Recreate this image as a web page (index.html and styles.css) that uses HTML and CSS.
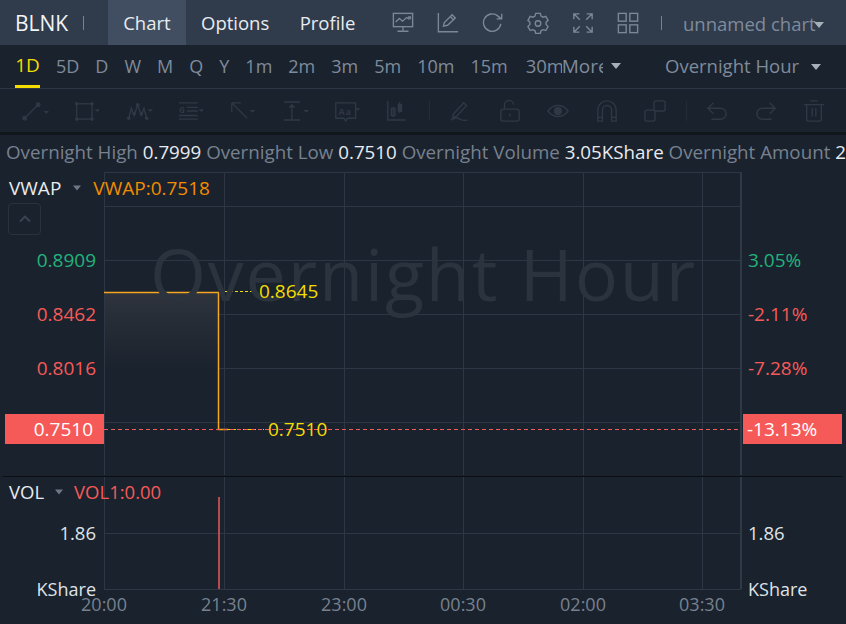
FILE: index.html
```html
<!DOCTYPE html>
<html lang="en">
<head>
<meta charset="utf-8">
<title>BLNK Chart</title>
<link rel="stylesheet" href="styles.css">
</head>
<body>
<div class="app">
  <header class="topbar">
    <div class="symbol">BLNK<span class="sep"></span></div>
    <nav class="tabs">
      <span class="tab active">Chart</span>
      <span class="tab">Options</span>
      <span class="tab">Profile</span>
    </nav>
    <div class="top-icons">
      <svg class="ti" viewBox="0 0 24 24"><rect x="1.500" y="1.500" width="21" height="14.500"/><path d="M4 11l4-4 3.500 3L16 6l3 2M17.500 5.500h2.500v2.500M12 16v4M6 21h12"/></svg>
      <svg class="ti" viewBox="0 0 24 24"><path d="M1.500 1v20.500H23M7 15.500l1-4L16.500 3l3.500 3.500-8.500 8-4.500 1zM14.500 5l3.500 3.500"/></svg>
      <svg class="ti" viewBox="0 0 24 24"><path d="M20.500 13a9.500 9.500 0 1 1-3-8.500L21 7.500M21.500 2v5.500H16"/></svg>
      <svg class="ti" viewBox="0 0 24 24"><path d="M9.500 1.500h5l.8 3 2.200 1.200 3-.9 2.500 4.300-2.200 2.200v2.400l2.200 2.200-2.500 4.300-3-.9-2.200 1.200-.8 3h-5l-.8-3-2.200-1.200-3 .9L1 15.900l2.200-2.200v-2.400L1 9.100l2.500-4.300 3 .9 2.200-1.200z"/><circle cx="12" cy="12.500" r="3"/></svg>
      <svg class="ti" viewBox="0 0 24 24"><path d="M2 8V2h6M2 2l6.500 6.500M16 2h6v6M22 2l-6.500 6.500M2 16v6h6M2 22l6.500-6.500M22 16v6h-6M22 22l-6.500-6.500"/></svg>
      <svg class="ti" viewBox="0 0 24 24"><rect x="1.500" y="1.500" width="8.500" height="8.500"/><rect x="14" y="1.500" width="8.500" height="8.500"/><rect x="1.500" y="14" width="8.500" height="8.500"/><rect x="14" y="14" width="8.500" height="8.500"/></svg>
    </div>
    <span class="sep top-sep"></span>
    <div class="chart-name">unnamed chart<span class="caret"></span></div>
  </header>

  <div class="periods">
    <span class="period on">1D</span><span class="period">5D</span><span class="period">D</span><span class="period">W</span><span class="period">M</span><span class="period">Q</span><span class="period">Y</span><span class="period">1m</span><span class="period">2m</span><span class="period">3m</span><span class="period">5m</span><span class="period">10m</span><span class="period">15m</span><span class="period last">30m</span>
    <span class="more"><span class="more-txt">More</span><span class="caret"></span></span>
    <span class="session">Overnight Hour<span class="caret"></span></span>
  </div>

  <div class="tools">
    <div class="tool-group draw">
      <svg class="tool t-c" viewBox="0 0 30 24"><circle cx="3" cy="20" r="2"/><circle cx="18" cy="5" r="2"/><path d="M4 19L17 6"/><path class="f" d="M24 12h6l-3 3z"/></svg>
      <svg class="tool t-c" viewBox="0 0 30 24"><rect x="3" y="4" width="17" height="17"/><g class="f"><circle cx="3" cy="4" r="2"/><circle cx="20" cy="4" r="2"/><circle cx="3" cy="21" r="2"/><circle cx="20" cy="21" r="2"/><path d="M23 10h6l-3 3z"/></g></svg>
      <svg class="tool t-c" viewBox="0 0 30 24"><path d="M3 20l3-11 3 8 4-12 4 12 3-8 3 11"/><g class="f"><circle cx="3" cy="20" r="2"/><circle cx="13" cy="5" r="2"/><circle cx="9" cy="15" r="2"/><circle cx="17" cy="15" r="2"/><circle cx="23" cy="20" r="2"/><path d="M24 10h6l-3 3z"/></g></svg>
      <svg class="tool t-c" viewBox="0 0 30 24"><path d="M1 3h21M10 8h12M10 12h12M1 17h21M1 21h21"/><text x="1" y="14" class="g">G</text><path class="f" d="M23 10h6l-3 3z"/></svg>
      <svg class="tool t-c" viewBox="0 0 30 24"><path d="M2 3h10M2 3v10M2 3l17 17"/><path class="f" d="M22 11h6l-3 3z"/></svg>
      <svg class="tool t-c" viewBox="0 0 30 24"><path d="M2 2h18M2 22h18M11 5v17"/><path class="f" d="M7 8l4-4 4 4zM24 11h6l-3 3z"/></svg>
      <svg class="tool t-c" viewBox="0 0 30 24"><path d="M2 3h22v17H15l-2 3-2-3H2z"/><text x="5" y="16" class="g wide">Aa</text><path class="f" d="M24 9h5l-3 3z"/></svg>
      <svg class="tool t-c" viewBox="0 0 30 24"><path d="M2 1v21h20M8 8v11M15 2v12"/><rect x="6" y="9" width="4" height="8"/><rect class="f" x="13" y="4" width="5" height="9"/></svg>
    </div>
    <span class="tool-sep s1"></span>
    <div class="tool-group edit">
      <svg class="tool" viewBox="0 0 24 24"><path d="M4 15L15 3l3 3L7 18l-4 1zM1 22c4-3 7-3 10-1s5 1 8 1"/></svg>
      <svg class="tool" viewBox="0 0 24 24"><rect x="2" y="10" width="20" height="13" rx="2.500"/><path d="M6 10V6a5 5 0 0 1 10-1M12 15v3"/></svg>
      <svg class="tool" viewBox="0 0 24 24"><path d="M1 12c6-8 16-8 22 0-6 8-16 8-22 0z"/><circle class="f" cx="12" cy="12" r="4.500"/></svg>
      <svg class="tool" viewBox="0 0 24 24"><path d="M2 23V11a10 10 0 0 1 20 0v12h-5V11a5 5 0 0 0-10 0v12zM2 19h5M17 19h5"/></svg>
      <svg class="tool" viewBox="0 0 24 24"><rect x="1" y="11" width="11" height="12" rx="2"/><rect x="11" y="1" width="12" height="11" rx="2"/></svg>
    </div>
    <span class="tool-sep s2"></span>
    <div class="tool-group edit">
      <svg class="tool" viewBox="0 0 24 24"><path d="M8 3L2 9l6 6M2 9h14a6 6 0 0 1 0 12H6"/></svg>
      <svg class="tool" viewBox="0 0 24 24"><path d="M16 3l6 6-6 6M22 9H8a6 6 0 0 0 0 12h10"/></svg>
      <svg class="tool" viewBox="0 0 24 24"><path d="M1 5h22M8 1h8M4 5v16a2 2 0 0 0 2 2h12a2 2 0 0 0 2-2V5M10 9v9M14 9v9"/></svg>
    </div>
  </div>

  <div class="stats"><span class="k">Overnight High</span> <b>0.7999</b> <span class="k">Overnight Low</span> <b>0.7510</b> <span class="k">Overnight Volume</span> <b>3.05KShare</b> <span class="k">Overnight Amount</span> <b>2</b></div>

  <main class="chart">
    <svg class="plot" width="846" height="452" viewBox="0 172 846 452">
      <defs>
        <linearGradient id="area" x1="0" y1="0" x2="0" y2="1">
          <stop offset="0" stop-color="#2e333c"/>
          <stop offset="1" stop-color="#1a222d"/>
        </linearGradient>
      </defs>
      <g class="grid">
        <path d="M104 172.500H741M104 206.500H741M104 260.500H741M104 314.500H741M104 368.500H741M104 422.500H741"/>
        <path d="M104.500 172V475M224.500 172V475M344.500 172V475M463.500 172V475M583.500 172V475M702.500 172V475"/>
        <path d="M104.500 477V589M224.500 477V589M344.500 477V589M463.500 477V589M583.500 477V589M702.500 477V589"/>
        <path d="M104 533.500H741M104 589.500H741"/>
      </g>
      <path class="axis" d="M741 172V475M741 477V589"/>
      <path class="divider" d="M2 476.500H843"/>
      <rect x="105" y="293" width="113" height="76" fill="url(#area)"/>
      <path class="price" d="M104 292.500H218.500V429.500H228"/>
      <path class="dash-y" d="M220 291.500H254M228 429.500H264"/>
      <path class="dash-r" d="M104 429.500H741"/>
      <path class="vol" d="M219 497V589"/>
    </svg>
    <div class="watermark">Overnight Hour</div>

    <div class="legend l-vwap"><span class="nm">VWAP</span><span class="caret"></span><span class="orange">VWAP:0.7518</span></div>
    <div class="collapse"><svg viewBox="0 0 12 8"><path d="M1 6.500L6 1.500l5 5"/></svg></div>

    <span class="yl green" style="top:247px">0.8909</span>
    <span class="yl red" style="top:301px">0.8462</span>
    <span class="yl red" style="top:355px">0.8016</span>
    <span class="tag tag-l">0.7510</span>
    <span class="yr green" style="top:247px">3.05%</span>
    <span class="yr red" style="top:301px">-2.11%</span>
    <span class="yr red" style="top:355px">-7.28%</span>
    <span class="tag tag-r">-13.13%</span>

    <span class="mark" style="left:259px;top:278px">0.8645</span>
    <span class="mark" style="left:268px;top:416px">0.7510</span>

    <div class="legend l-vol"><span class="nm">VOL</span><span class="caret"></span><span class="redtxt">VOL1:0.00</span></div>
    <span class="yl white" style="top:520px">1.86</span>
    <span class="yl white small" style="top:576px">KShare</span>
    <span class="yr white" style="top:520px">1.86</span>
    <span class="yr white small" style="top:576px">KShare</span>

    <span class="xl" style="left:104px">20:00</span>
    <span class="xl" style="left:224px">21:30</span>
    <span class="xl" style="left:344px">23:00</span>
    <span class="xl" style="left:463px">00:30</span>
    <span class="xl" style="left:583px">02:00</span>
    <span class="xl" style="left:702px">03:30</span>
  </main>
</div>
</body>
</html>
```
FILE: styles.css
```css
* { box-sizing: border-box; }
html, body { margin: 0; padding: 0; }
body {
  width: 846px;
  height: 624px;
  overflow: hidden;
  background: #1a222d;
  font-family: "Open Sans", "Noto Sans", sans-serif;
  font-size: 19px;
  color: #e8ebef;
}
.app { width: 846px; height: 624px; position: relative; overflow: hidden; }

.topbar {
  height: 45px;
  background: #303b4c;
  display: flex;
  align-items: center;
  font-size: 18.500px;
}
.symbol {
  width: 108px;
  padding-left: 15px;
  font-size: 21px;
  display: flex;
  align-items: center;
  color: #f2f4f6;
}
.sep { display: inline-block; width: 1px; height: 14px; background: #77818f; flex: none; }
.symbol .sep { margin-left: 15px; }
.tabs { display: flex; height: 45px; width: 269px; flex: none; }
.tab { display: flex; align-items: center; padding: 0 15.200px; color: #e8ebef; }
.tab.active { background: #414d60; }
.top-icons { display: flex; gap: 23px; margin-left: 15px; align-items: center; flex: none; }
.ti { width: 22px; height: 22px; fill: none; stroke: #7c8796; stroke-width: 1.500; }
.top-sep { margin-left: 22px; }
.chart-name { margin-left: 21px; color: #7f8b9b; white-space: nowrap; padding-top: 1px; }
.caret {
  display: inline-block;
  width: 0; height: 0;
  border-left: 5px solid transparent;
  border-right: 5px solid transparent;
  border-top: 6px solid currentColor;
  vertical-align: 3px;
}
.chart-name .caret { color: #a6afba; margin-left: -2px; }

.periods {
  height: 44px;
  display: flex;
  align-items: center;
  gap: 16px;
  padding-left: 15px;
  border-bottom: 1px solid #2c3644;
  color: #7f8b9b;
  font-size: 18px;
  white-space: nowrap;
  position: relative;
}
.period { display: flex; align-items: center; height: 43px; padding-bottom: 2px; flex: none; }
.period.on { color: #f4dc00; border-bottom: 3px solid #f4dc00; padding-bottom: 0; width: 25px; justify-content: center; font-size: 19px; }
.period.last { width: 36px; overflow: hidden; margin: 0 -16px 0 2px; font-size: 18.500px; }
.more { display: flex; align-items: center; padding-bottom: 2px; flex: none; font-size: 19px; }
.more-txt { display: block; width: 41px; overflow: hidden; }
.more .caret { color: #a6afba; margin-left: 8px; }
.session { position: absolute; left: 665px; top: 8px; font-size: 18.500px; }
.session .caret { color: #a6afba; margin-left: 12px; }

.tools {
  height: 43px;
  display: flex;
  align-items: center;
  padding-left: 22px;
}
.tool-group { display: flex; align-items: center; flex: none; }
.draw { gap: 25px; }
.edit { gap: 26.500px; }
.tool { height: 22px; width: 22px; flex: none; fill: none; stroke: #2f3845; stroke-width: 1.500; }
.t-c { width: 27px; height: 22px; }
.tool .f { fill: #2f3845; stroke: none; }
.tool circle { fill: #2f3845; }
.tool .g { fill: #2f3845; stroke: none; font-size: 9px; font-family: "Open Sans", sans-serif; font-weight: 700; }
.tool .wide { font-size: 10px; letter-spacing: 1px; }
.tool-sep { width: 1px; height: 20px; background: #242c38; flex: none; }
.s1 { margin: 0 20px 0 16px; }
.s2 { margin: 0 19px 0 20px; }

.stats {
  height: 40px;
  border-top: 3px solid #11161d;
  padding: 4px 0 0 6px;
  font-size: 18.750px;
  white-space: nowrap;
  color: #e8ebef;
}
.stats .k { color: #77818f; }
.stats b { font-weight: 400; }

.chart { position: absolute; left: 0; top: 172px; width: 846px; height: 452px; }
.chart > span, .chart > div { position: absolute; white-space: nowrap; line-height: 26px; }
.plot { position: absolute; left: 0; top: 0; display: block; }
.grid path { stroke: #2c3644; stroke-width: 1; fill: none; }
.axis { stroke: #2e3847; stroke-width: 2; fill: none; }
.divider { stroke: #0c1015; stroke-width: 1; }
.price { stroke: #f5a623; stroke-width: 1.500; fill: none; }
.dash-y { stroke: #f4dc00; stroke-width: 1; stroke-dasharray: 3 2; fill: none; }
.dash-r { stroke: #f65a58; stroke-width: 1; stroke-dasharray: 4 3; fill: none; }
.vol { stroke: #e85b5a; stroke-width: 1.500; }
.chart > .watermark { left: 150px; top: 56px; font-size: 72px; line-height: 90px; color: #2b333e; letter-spacing: 1.800px; }
.legend { display: flex; align-items: center; }
.nm { color: #e8ebef; }
.legend .caret { color: #6d7785; margin: 0 11px 0 11px; transform: scale(.8); flex: none; vertical-align: 0; }
.orange { color: #f28c00; }
.redtxt { color: #f65a58; }
.l-vwap { left: 9px; top: 3px; }
.l-vol { left: 9px; top: 307px; font-size: 18.500px; }
.l-vol .caret { margin: 0 10px; }
.collapse { left: 8px; top: 31px; width: 33px; height: 32px; border: 1px solid #2a323e; border-radius: 4px; display: flex; align-items: center; justify-content: center; }
.collapse svg { width: 12px; height: 8px; fill: none; stroke: #3b4451; stroke-width: 1.800; }
.yl { right: 750px; text-align: right; }
.yr { left: 748px; }
.green { color: #22b37c; }
.red { color: #f65a58; }
.white { color: #dfe3e8; font-size: 18.500px; }
.small { font-size: 18px; }
.chart > .yl, .chart > .yr, .chart > .mark, .chart > .xl { margin-top: -172px; }
.chart > .tag { top: 242px; height: 30px; width: 99px; background: #f65a58; color: #fff; line-height: 30px; }
.tag-l { left: 5px; text-align: right; padding-right: 11px; }
.tag-r { left: 743px; padding-left: 4px; }
.mark { color: #f4dc00; }
.xl { top: 591px; transform: translateX(-50%); color: #77818f; font-size: 18px; }
```
